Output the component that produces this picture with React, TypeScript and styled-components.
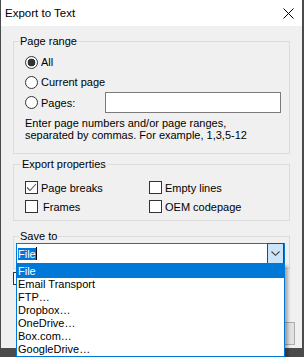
import styled, { createGlobalStyle } from 'styled-components';

const GlobalStyle = createGlobalStyle`
  html, body {
    margin: 0;
    padding: 0;
    background: #4b4b4b;
  }
  body {
    font-family: "Liberation Sans", Arial, sans-serif;
    font-size: 11px;
    color: #000;
  }
  * {
    box-sizing: border-box;
  }
`;

const StyledDesktop = styled.div`
  height: 357px;
  padding-left: 1px;
  background: #4b4b4b;
`;

const StyledWindow = styled.div`
  position: relative;
  width: 301px;
  height: 348px;
  background: #f0f0f0;
`;

const StyledTitleBar = styled.div`
  display: flex;
  align-items: center;
  justify-content: space-between;
  height: 26px;
  padding: 0 8px 0 4px;
  background: #fff;
  font-size: 11.5px;
`;

const StyledContent = styled.div`
  display: flex;
  flex-direction: column;
  padding: 8px 12px 0;
`;

const StyledGroup = styled.fieldset<{ $top?: number }>`
  margin: ${(props) => props.$top ?? 0}px 0 0;
  padding: 0;
  min-width: 0;
  border: 1px solid #dcdcdc;
`;

const StyledLegend = styled.legend<{ $offset: number }>`
  margin-left: ${(props) => props.$offset}px;
  padding: 0 1px;
  line-height: 14px;
`;

const StyledGroupBody = styled.div<{ $pad: string }>`
  padding: ${(props) => props.$pad};
`;

const StyledOptionRow = styled.div`
  display: flex;
  align-items: center;
  gap: 3px;
  height: 20px;
`;

const StyledPagesRow = styled.div`
  display: grid;
  grid-template-columns: 80px 176px;
  align-items: center;
  height: 20px;
`;

const StyledRadio = styled.span<{ $checked?: boolean }>`
  flex: none;
  width: 13px;
  height: 13px;
  border: 1px solid #333;
  border-radius: 50%;
  background: ${(props) =>
    props.$checked
      ? 'radial-gradient(circle, #333 0 3.6px, #fff 4.2px)'
      : '#fff'};
`;

const StyledInput = styled.input`
  width: 176px;
  height: 21px;
  margin: 0;
  padding: 0 3px;
  border: 1px solid #7a7a7a;
  background: #fff;
  font: inherit;
`;

const StyledHint = styled.p`
  margin: 5px 0 0;
  line-height: 12px;
`;

const StyledChecks = styled.div`
  display: grid;
  grid-template-columns: 124px 1fr;
  grid-auto-rows: 19px;
`;

const StyledCheckRow = styled.label`
  display: flex;
  align-items: center;
  gap: 3px;
`;

const StyledCheckbox = styled.span`
  flex: none;
  display: flex;
  align-items: center;
  justify-content: center;
  width: 13px;
  height: 13px;
  border: 1px solid #333;
  background: #fff;
`;

const StyledCheckText = styled.span<{ $shift?: number }>`
  margin-left: ${(props) => props.$shift ?? 0}px;
`;

const StyledComboWrap = styled.div`
  position: relative;
  width: 269px;
`;

const StyledCombo = styled.div`
  display: flex;
  align-items: center;
  height: 21px;
  padding-left: 1px;
  border: 1px solid #0078d7;
  background: #fff;
`;

const StyledSelection = styled.span`
  height: 12px;
  line-height: 12px;
  background: #0078d7;
  color: #fff;
`;

const StyledCaret = styled.span`
  width: 1px;
  height: 13px;
  background: #000;
`;

const StyledDropButton = styled.span`
  display: flex;
  align-items: center;
  justify-content: center;
  width: 17px;
  height: 21px;
  margin: -1px 0 -1px auto;
  border: 1px solid #005499;
  background: #cce4f7;
`;

const StyledList = styled.ul`
  position: absolute;
  top: 20px;
  left: 0;
  z-index: 2;
  width: 100%;
  margin: 0;
  padding: 0;
  list-style: none;
  border: 1px solid #0078d7;
  background: #fff;
  box-shadow: 3px 3px 3px rgba(0, 0, 0, 0.3);
`;

const StyledItem = styled.li<{ $active?: boolean }>`
  height: 13px;
  padding-left: 1px;
  line-height: 13px;
  white-space: nowrap;
  background: ${(props) => (props.$active ? '#0078d7' : 'transparent')};
  color: ${(props) => (props.$active ? '#fff' : '#000')};
  &:first-child {
    height: 14px;
    padding-top: 1px;
  }
`;

const StyledHiddenRow = styled.div`
  margin-top: 3px;
  height: 13px;
`;

const StyledFooter = styled.div`
  display: flex;
  justify-content: flex-end;
  gap: 6px;
  margin: 37px -5px 0 0;
`;

const StyledButton = styled.button`
  width: 75px;
  height: 23px;
  margin: 0;
  border: 1px solid #adadad;
  background: #e1e1e1;
  font: inherit;
`;

const destinations = [
  'File',
  'Email Transport',
  'FTP…',
  'Dropbox…',
  'OneDrive…',
  'Box.com…',
  'GoogleDrive…',
];

const CloseIcon = () => (
  <svg width="11" height="11" viewBox="0 0 11 11">
    <path d="M0.5 0.5L10.5 10.5M10.5 0.5L0.5 10.5" stroke="#000" strokeWidth="1" />
  </svg>
);

const CheckMark = () => (
  <svg width="11" height="11" viewBox="0 0 11 11">
    <polyline points="1,5.5 4,8.5 10,2" fill="none" stroke="#555" strokeWidth="1.1" />
  </svg>
);

const Chevron = () => (
  <svg width="9" height="5" viewBox="0 0 9 5">
    <polyline points="0.5,0.5 4.5,4.3 8.5,0.5" fill="none" stroke="#444" strokeWidth="1.1" />
  </svg>
);

type CheckProps = { label: string; checked?: boolean; shift?: number };

const Check = ({ label, checked, shift }: CheckProps) => (
  <StyledCheckRow>
    <StyledCheckbox>{checked && <CheckMark />}</StyledCheckbox>
    <StyledCheckText $shift={shift}>{label}</StyledCheckText>
  </StyledCheckRow>
);

export default function App() {
  return (
    <>
      <GlobalStyle />
      <StyledDesktop>
        <StyledWindow>
          <StyledTitleBar>
            <span>Export to Text</span>
            <CloseIcon />
          </StyledTitleBar>
          <StyledContent>
            <StyledGroup>
              <StyledLegend $offset={5}>Page range</StyledLegend>
              <StyledGroupBody $pad="4px 11px 12px">
                <StyledOptionRow>
                  <StyledRadio $checked />
                  <span>All</span>
                </StyledOptionRow>
                <StyledOptionRow>
                  <StyledRadio />
                  <span>Current page</span>
                </StyledOptionRow>
                <StyledPagesRow>
                  <StyledOptionRow>
                    <StyledRadio />
                    <span>Pages:</span>
                  </StyledOptionRow>
                  <StyledInput type="text" aria-label="Pages" />
                </StyledPagesRow>
                <StyledHint>
                  Enter page numbers and/or page ranges,
                  <br />
                  separated by commas. For example, 1,3,5-12
                </StyledHint>
              </StyledGroupBody>
            </StyledGroup>

            <StyledGroup $top={3}>
              <StyledLegend $offset={7}>Export properties</StyledLegend>
              <StyledGroupBody $pad="7px 11px 4px">
                <StyledChecks>
                  <Check label="Page breaks" checked />
                  <Check label="Empty lines" />
                  <Check label="Frames" shift={2} />
                  <Check label="OEM codepage" />
                </StyledChecks>
              </StyledGroupBody>
            </StyledGroup>

            <StyledGroup $top={8}>
              <StyledLegend $offset={5}>Save to</StyledLegend>
              <StyledGroupBody $pad="0 2px 4px">
                <StyledComboWrap>
                  <StyledCombo>
                    <StyledSelection>File</StyledSelection>
                    <StyledCaret />
                    <StyledDropButton>
                      <Chevron />
                    </StyledDropButton>
                  </StyledCombo>
                  <StyledList>
                    {destinations.map((item, i) => (
                      <StyledItem key={item} $active={i === 0}>
                        {item}
                      </StyledItem>
                    ))}
                  </StyledList>
                </StyledComboWrap>
              </StyledGroupBody>
            </StyledGroup>

            <StyledHiddenRow>
              <StyledCheckbox />
            </StyledHiddenRow>

            <StyledFooter>
              <StyledButton aria-label="OK" />
              <StyledButton aria-label="Cancel" />
            </StyledFooter>
          </StyledContent>
        </StyledWindow>
      </StyledDesktop>
    </>
  );
}
